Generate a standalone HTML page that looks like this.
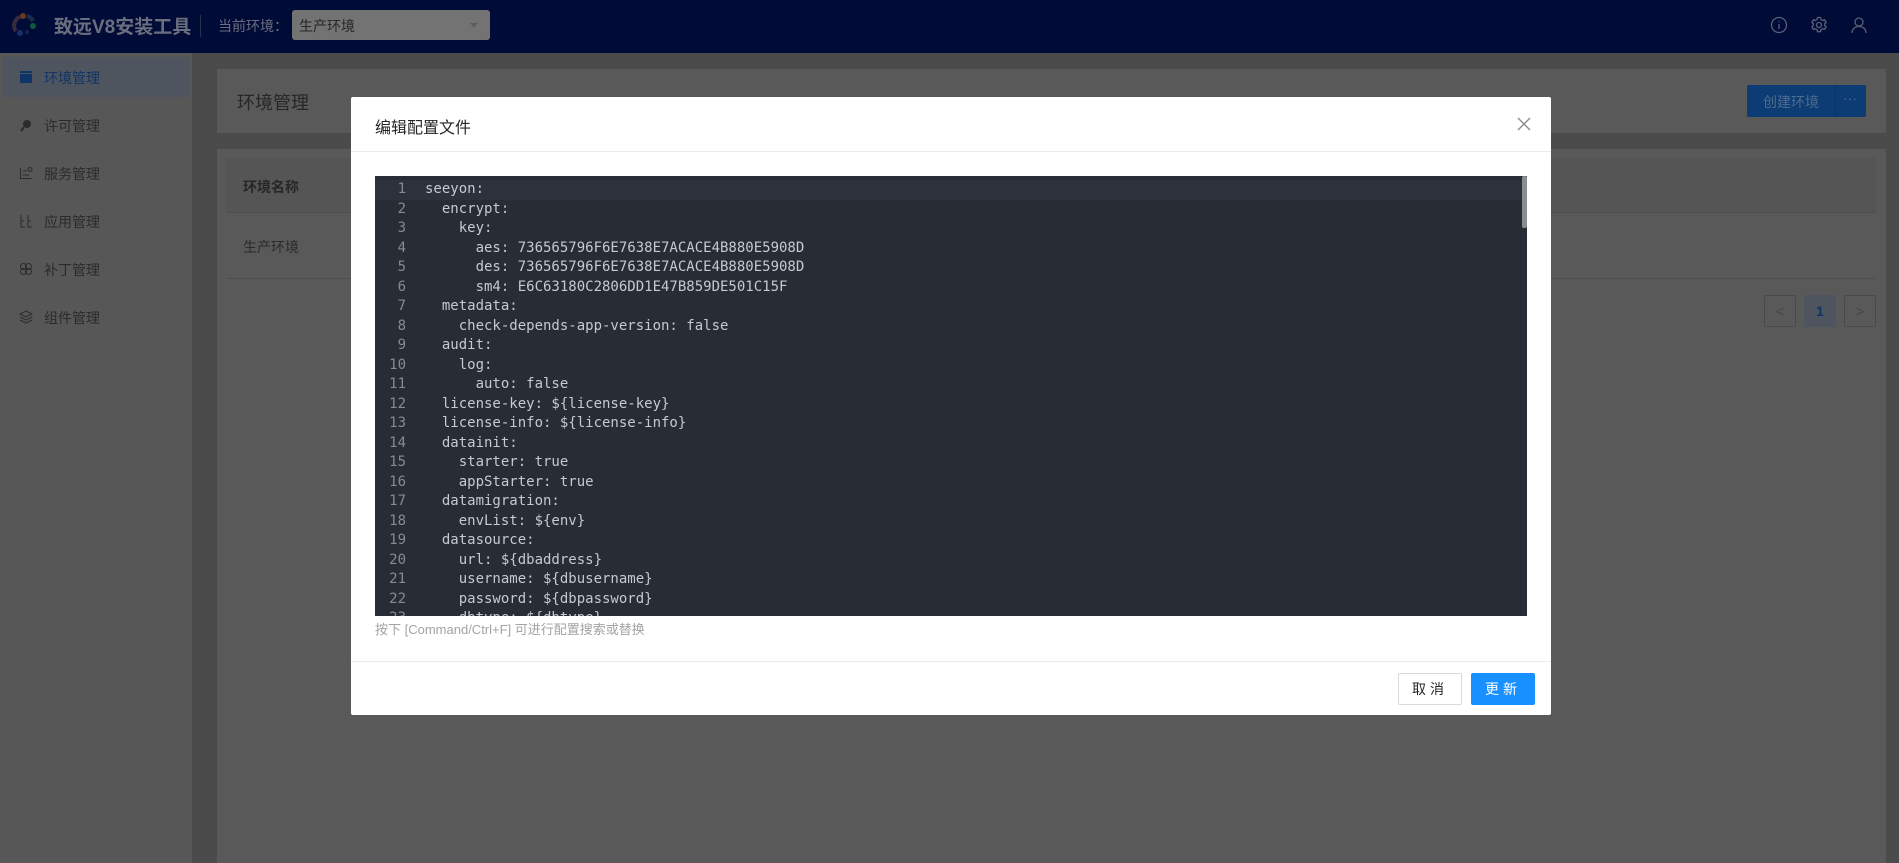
<!DOCTYPE html>
<html><head><meta charset="utf-8"><style>
*{margin:0;padding:0;box-sizing:border-box}
body{width:1899px;height:863px;overflow:hidden;background:#4b4b4b;font-family:"Liberation Sans","Noto Sans CJK SC",sans-serif;position:relative}
.hdr{position:absolute;left:0;top:0;width:1899px;height:53px;background:#000c37}
.title{position:absolute;left:54px;top:12px;font-size:19px;font-weight:bold;color:#6b6e7e}
.sep{position:absolute;left:200px;top:15px;width:1px;height:22px;background:#2a3150}
.cur{position:absolute;left:218px;top:16px;font-size:14px;color:#6b6e7e}
.sel{position:absolute;left:292px;top:10px;width:198px;height:30px;background:#737373;border-radius:3px;font-size:14px;color:#262626;padding:6px 7px}
.sel:after{content:"";position:absolute;right:12px;top:13px;border:4px solid transparent;border-top:5px solid #5e5e5e}
.side{position:absolute;left:0;top:53px;width:192px;height:810px;background:#575757}
.it{position:absolute;left:0;width:192px;height:40px;font-size:14px;color:#2b2b2b;padding:11px 0 0 44px}
.it svg{position:absolute;left:19px;top:13px}
.it.act{left:3px;width:187px;background:#4f555e;color:#0f3466;padding-left:41px}
.it.act svg{left:16px}
.card{position:absolute;background:#595959}
.modal{position:absolute;left:351px;top:97px;width:1200px;height:618px;background:#fff;border-radius:2px}
.mh{height:55px;border-bottom:1px solid #ebebeb;font-size:16px;color:#262626;padding:17px 0 0 24px}
.close{position:absolute;left:1166px;top:20px}
.ed{position:absolute;left:24px;top:79px;width:1152px;height:440px;background:#282c34;overflow:hidden;font-family:"DejaVu Sans Mono","Liberation Mono",monospace;font-size:14px;color:#c5c9d0}
.ln{height:19.5px;line-height:19.5px;white-space:pre;position:relative}
.ln b{display:inline-block;width:31px;text-align:right;font-weight:normal;color:#868b94;margin-right:19px}
.ln.hl{background:#2c313c}
.sb{position:absolute;right:0;top:0;width:5px;height:52px;background:#8a8d92;border-radius:2px}
.hint{position:absolute;left:24px;top:522px;font-size:13px;color:#a3a3a3}
.mf{position:absolute;left:0;top:564px;width:1200px;border-top:1px solid #ebebeb}
.btn{position:absolute;top:576px;height:32px;font-size:14px;text-align:center;line-height:30px;border-radius:2px;letter-spacing:4px}
</style></head><body>
<div class="hdr">
<svg style="position:absolute;left:10px;top:11px" width="28" height="28" viewBox="0 0 28 28"><path d="M6 20 A9 9 0 0 1 10 6" stroke="#3a2a40" stroke-width="4" fill="none"/><path d="M17 5 A9 9 0 0 1 23 10" stroke="#1b2b4a" stroke-width="4" fill="none"/><circle cx="13" cy="5" r="3" fill="#6a3a1e"/><circle cx="23" cy="15" r="3" fill="#0e5a3a"/><circle cx="10" cy="22" r="3" fill="#1a2f6a"/><circle cx="17" cy="21" r="2" fill="#1a2250"/></svg>
<div class="title">致远V8安装工具</div><div class="sep"></div>
<div class="cur">当前环境：</div><div class="sel">生产环境</div>
<svg style="position:absolute;left:1770px;top:16px" width="18" height="18" viewBox="0 0 18 18" fill="none" stroke="#5a5f75" stroke-width="1.3"><circle cx="9" cy="9" r="7.5"/><path d="M9 8v5M9 5.2v1"/></svg>
<svg style="position:absolute;left:1810px;top:16px" width="18" height="18" viewBox="0 0 18 18" fill="none" stroke="#5a5f75" stroke-width="1.3"><path d="M7.5 1.5h3l.5 2 1.6 1 2-.7 1.5 2.6-1.5 1.4v1.6l1.5 1.4-1.5 2.6-2-.7-1.6 1-.5 2h-3l-.5-2-1.6-1-2 .7-1.5-2.6 1.5-1.4V7.8L1.9 6.4l1.5-2.6 2 .7 1.6-1z"/><circle cx="9" cy="9" r="2.5"/></svg>
<svg style="position:absolute;left:1850px;top:16px" width="18" height="18" viewBox="0 0 18 18" fill="none" stroke="#5a5f75" stroke-width="1.3"><circle cx="9" cy="6" r="4"/><path d="M2 17c0-4 3-6.5 7-6.5s7 2.5 7 6.5"/></svg>
</div>
<div class="side">
<div class="it act" style="top:4px"><svg width="14" height="14"><rect x="1" y="1" width="12" height="12" rx="1" fill="#0f3466"/><rect x="1" y="3" width="12" height="1" fill="#4f555e"/></svg>环境管理</div>
<div class="it" style="top:52px"><svg width="14" height="14"><circle cx="8" cy="6" r="4" fill="#2b2b2b"/><path d="M5 9 L2 13" stroke="#2b2b2b" stroke-width="2"/></svg>许可管理</div>
<div class="it" style="top:100px"><svg width="14" height="14" fill="none" stroke="#2b2b2b"><path d="M1.5 2v10.5h11M4 5h4M4 9h6"/><circle cx="11" cy="3.5" r="2"/></svg>服务管理</div>
<div class="it" style="top:148px"><svg width="14" height="14" fill="none" stroke="#2b2b2b"><path d="M2 1v12h4M9 1v12h4M2 7h3M9 7h3"/></svg>应用管理</div>
<div class="it" style="top:196px"><svg width="14" height="14" fill="none" stroke="#2b2b2b"><circle cx="4.5" cy="4.5" r="3"/><circle cx="9.5" cy="9.5" r="3"/><circle cx="9.5" cy="4.5" r="3"/><circle cx="4.5" cy="9.5" r="3"/></svg>补丁管理</div>
<div class="it" style="top:244px"><svg width="14" height="14" fill="none" stroke="#2b2b2b"><path d="M7 1l6 3-6 3-6-3zM1 7l6 3 6-3M1 10l6 3 6-3"/></svg>组件管理</div>
</div>
<div class="card" style="left:217px;top:69px;width:1669px;height:64px"></div>
<div style="position:absolute;left:237px;top:89px;font-size:18px;color:#262626">环境管理</div>
<div style="position:absolute;left:1747px;top:85px;width:119px;height:32px;background:#0c3c73;border-radius:2px;font-size:14px;color:#4d6c8f;padding:7px 0 0 16px">创建环境<span style="position:absolute;left:88px;top:0;width:1px;height:32px;background:#0a3468"></span><span style="position:absolute;left:96px;top:5px">···</span></div>
<div class="card" style="left:217px;top:149px;width:1669px;height:714px"></div>
<div style="position:absolute;left:226px;top:158px;width:1650px;height:55px;background:#555;border-bottom:1px solid #4e4e4e"></div>
<div style="position:absolute;left:243px;top:177px;font-size:14px;font-weight:bold;color:#262626">环境名称</div>
<div style="position:absolute;left:243px;top:237px;font-size:14px;color:#2b2b2b">生产环境</div>
<div style="position:absolute;left:226px;top:278px;width:1650px;height:1px;background:#4e4e4e"></div>
<div style="position:absolute;left:1764px;top:295px;width:32px;height:32px;border:1px solid #4a4a4a;border-radius:2px;color:#444;font-size:14px;text-align:center;line-height:30px">&lt;</div>
<div style="position:absolute;left:1804px;top:295px;width:32px;height:32px;background:#4f555e;border-radius:2px;color:#0f3466;font-size:14px;font-weight:bold;text-align:center;line-height:32px">1</div>
<div style="position:absolute;left:1844px;top:295px;width:32px;height:32px;border:1px solid #4a4a4a;border-radius:2px;color:#444;font-size:14px;text-align:center;line-height:30px">&gt;</div>

<div class="modal">
<div class="mh">编辑配置文件</div>
<svg class="close" width="14" height="14" stroke="#8c8c8c" stroke-width="1.4"><path d="M1 1L13 13M13 1L1 13"/></svg>
<div class="ed"><div style="height:4px"></div>
<div class="ln hl"><b>1</b>seeyon:</div>
<div class="ln"><b>2</b>  encrypt:</div>
<div class="ln"><b>3</b>    key:</div>
<div class="ln"><b>4</b>      aes: 736565796F6E7638E7ACACE4B880E5908D</div>
<div class="ln"><b>5</b>      des: 736565796F6E7638E7ACACE4B880E5908D</div>
<div class="ln"><b>6</b>      sm4: E6C63180C2806DD1E47B859DE501C15F</div>
<div class="ln"><b>7</b>  metadata:</div>
<div class="ln"><b>8</b>    check-depends-app-version: false</div>
<div class="ln"><b>9</b>  audit:</div>
<div class="ln"><b>10</b>    log:</div>
<div class="ln"><b>11</b>      auto: false</div>
<div class="ln"><b>12</b>  license-key: ${license-key}</div>
<div class="ln"><b>13</b>  license-info: ${license-info}</div>
<div class="ln"><b>14</b>  datainit:</div>
<div class="ln"><b>15</b>    starter: true</div>
<div class="ln"><b>16</b>    appStarter: true</div>
<div class="ln"><b>17</b>  datamigration:</div>
<div class="ln"><b>18</b>    envList: ${env}</div>
<div class="ln"><b>19</b>  datasource:</div>
<div class="ln"><b>20</b>    url: ${dbaddress}</div>
<div class="ln"><b>21</b>    username: ${dbusername}</div>
<div class="ln"><b>22</b>    password: ${dbpassword}</div>
<div class="ln"><b>23</b>    dbtype: ${dbtype}</div>
<div class="sb"></div>
</div>
<div class="hint">按下 [Command/Ctrl+F] 可进行配置搜索或替换</div>
<div class="mf"></div>
<div class="btn" style="left:1047px;width:64px;border:1px solid #d9d9d9;color:#262626;background:#fff">取消</div>
<div class="btn" style="left:1120px;width:64px;background:#1890ff;color:#fff;line-height:32px">更新</div>
</div>
</body></html>
